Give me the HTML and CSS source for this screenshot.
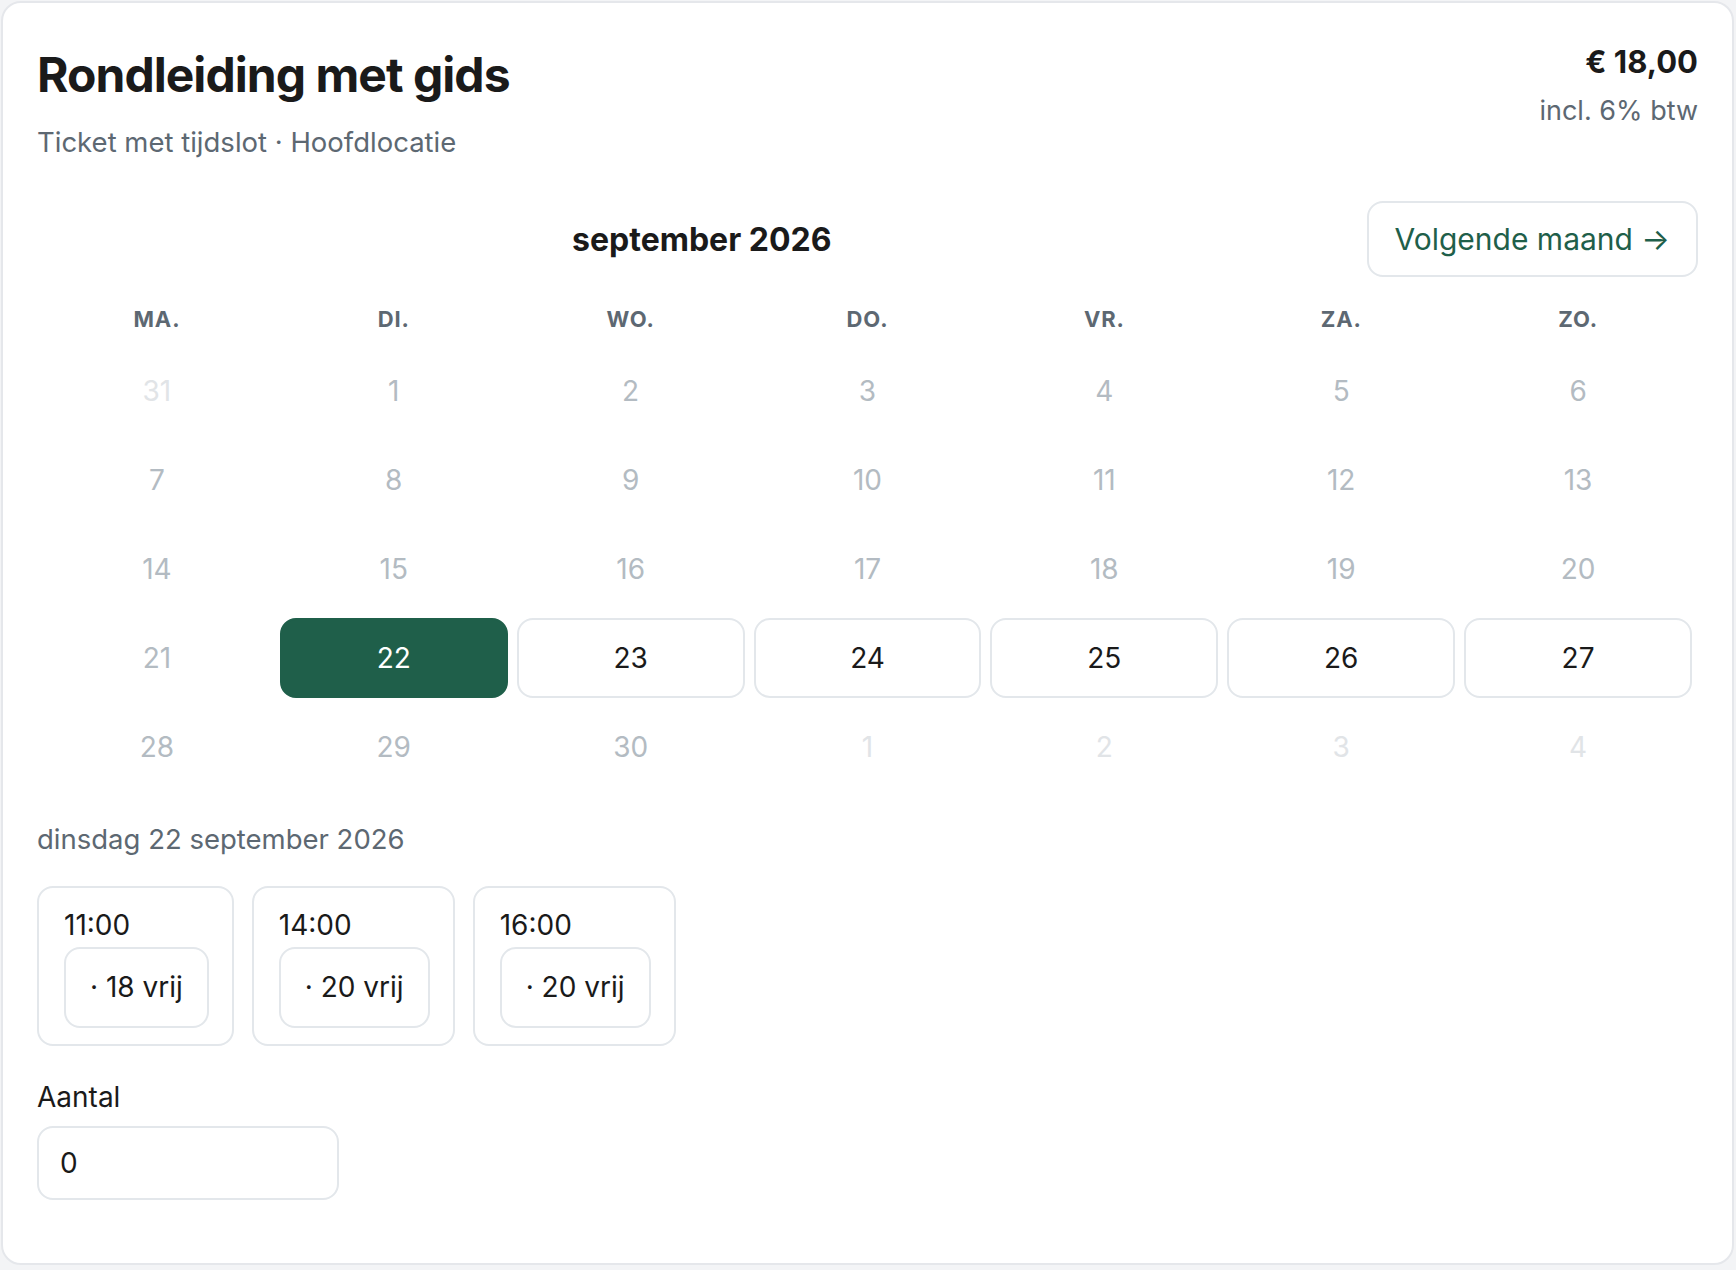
FILE: index.html
```html
<!DOCTYPE html>
<html lang="nl">
<head>
  <meta charset="UTF-8">
  <meta name="viewport" content="width=device-width, initial-scale=1.0">
  <title>Rondleiding met gids</title>
  <link rel="stylesheet" href="styles.css">
</head>
<body>
  <!-- Ticket card -->
  <main class="ticket-card">
    <header class="ticket-header">
      <div class="ticket-info">
        <h1>Rondleiding met gids</h1>
        <p class="ticket-meta">Ticket met tijdslot · Hoofdlocatie</p>
      </div>
      <div class="ticket-price">
        <div class="price">€ 18,00</div>
        <div class="vat">incl. 6% btw</div>
      </div>
    </header>

    <!-- Calendar -->
    <section class="calendar">
      <div class="calendar-nav">
        <h2 class="month-title">september 2026</h2>
        <button class="next-month" type="button">Volgende maand →</button>
      </div>

      <div class="weekdays">
        <span>MA.</span>
        <span>DI.</span>
        <span>WO.</span>
        <span>DO.</span>
        <span>VR.</span>
        <span>ZA.</span>
        <span>ZO.</span>
      </div>

      <div class="days">
        <span class="day outside">31</span>
        <span class="day disabled">1</span>
        <span class="day disabled">2</span>
        <span class="day disabled">3</span>
        <span class="day disabled">4</span>
        <span class="day disabled">5</span>
        <span class="day disabled">6</span>

        <span class="day disabled">7</span>
        <span class="day disabled">8</span>
        <span class="day disabled">9</span>
        <span class="day disabled">10</span>
        <span class="day disabled">11</span>
        <span class="day disabled">12</span>
        <span class="day disabled">13</span>

        <span class="day disabled">14</span>
        <span class="day disabled">15</span>
        <span class="day disabled">16</span>
        <span class="day disabled">17</span>
        <span class="day disabled">18</span>
        <span class="day disabled">19</span>
        <span class="day disabled">20</span>

        <span class="day disabled">21</span>
        <button class="day selected" type="button">22</button>
        <button class="day available" type="button">23</button>
        <button class="day available" type="button">24</button>
        <button class="day available" type="button">25</button>
        <button class="day available" type="button">26</button>
        <button class="day available" type="button">27</button>

        <span class="day disabled">28</span>
        <span class="day disabled">29</span>
        <span class="day disabled">30</span>
        <span class="day outside">1</span>
        <span class="day outside">2</span>
        <span class="day outside">3</span>
        <span class="day outside">4</span>
      </div>
    </section>

    <!-- Time slots -->
    <section class="slots">
      <p class="selected-date">dinsdag 22 september 2026</p>
      <div class="slot-list">
        <button class="slot" type="button">
          <span class="slot-time">11:00</span>
          <span class="slot-free">· 18 vrij</span>
        </button>
        <button class="slot" type="button">
          <span class="slot-time">14:00</span>
          <span class="slot-free">· 20 vrij</span>
        </button>
        <button class="slot" type="button">
          <span class="slot-time">16:00</span>
          <span class="slot-free">· 20 vrij</span>
        </button>
      </div>
    </section>

    <!-- Quantity -->
    <div class="quantity">
      <label for="quantity">Aantal</label>
      <input type="number" id="quantity" name="quantity" value="0" min="0">
    </div>
  </main>
</body>
</html>
```

FILE: styles.css
```css
/* General Styles */
body {
  font-family: Inter, "Noto Sans", sans-serif;
  margin: 0;
  padding: 0;
  background-color: #f3f4f6;
  color: #1a1a1a;
}

button,
input {
  font-family: inherit;
}

/* Card */
.ticket-card {
  margin: 1px 2px 4px 1px;
  padding: 44px 34px 63px 34px;
  background: white;
  border: 2px solid #e5e7eb;
  border-radius: 20px;
}

/* Header */
.ticket-header {
  display: flex;
  justify-content: space-between;
  align-items: flex-start;
}

.ticket-info h1 {
  margin: 0;
  font-size: 48px;
  line-height: 56px;
  font-weight: 700;
  letter-spacing: -0.02em;
}

.ticket-meta {
  margin: 19px 0 0 0;
  font-size: 27.5px;
  line-height: 40px;
  color: #5d6872;
}

.ticket-price {
  text-align: right;
}

.price {
  font-size: 31px;
  line-height: 30px;
  font-weight: 700;
}

.vat {
  margin-top: 14px;
  font-size: 27px;
  line-height: 40px;
  color: #5d6872;
}

/* Calendar */
.calendar-nav {
  display: flex;
  align-items: center;
  margin-top: 39px;
}

.month-title {
  flex: 1;
  margin: 0;
  text-align: center;
  font-size: 32px;
  font-weight: 700;
}

.next-month {
  background: white;
  color: #1f5f4a;
  border: 2px solid #e3e7eb;
  border-radius: 16px;
  padding: 18px 26px;
  font-size: 30px;
  line-height: 36px;
  cursor: pointer;
}

.weekdays,
.days {
  display: grid;
  grid-template-columns: repeat(7, 1fr);
  column-gap: 9px;
  padding: 0 6px;
}

.weekdays {
  margin-top: 24px;
  text-align: center;
  font-size: 22px;
  line-height: 36px;
  font-weight: 700;
  letter-spacing: 0.04em;
  color: #5d6872;
}

.days {
  margin-top: 14px;
  row-gap: 9px;
}

.day {
  display: flex;
  align-items: center;
  justify-content: center;
  height: 80px;
  font-size: 28px;
  border: 2px solid transparent;
  border-radius: 16px;
  box-sizing: border-box;
  background: none;
  padding: 0;
}

.day.outside {
  color: #e1e4e7;
}

.day.disabled {
  color: #b3bbc2;
}

.day.available {
  background: white;
  border-color: #e3e7eb;
  color: #1a1a1a;
  cursor: pointer;
}

.day.selected {
  background: #1f5f4a;
  border-color: #1f5f4a;
  color: white;
  cursor: pointer;
}

/* Time slots */
.selected-date {
  margin: 32px 0 0 0;
  font-size: 27.5px;
  line-height: 40px;
  color: #5d6872;
}

.slot-list {
  display: flex;
  gap: 18px;
  margin-top: 27px;
}

.slot {
  display: flex;
  flex-direction: column;
  align-items: flex-start;
  gap: 2px;
  padding: 17px 23px 16px 25px;
  background: white;
  border: 2px solid #e3e7eb;
  border-radius: 16px;
  color: #1a1a1a;
  cursor: pointer;
}

.slot-time {
  font-size: 28px;
  line-height: 40px;
}

.slot-free {
  display: inline-block;
  padding: 18px 24px;
  border: 2px solid #e3e7eb;
  border-radius: 16px;
  font-size: 28px;
  line-height: 41px;
}

/* Quantity */
.quantity {
  display: flex;
  flex-direction: column;
  align-items: flex-start;
  margin-top: 31px;
}

.quantity label {
  font-size: 28px;
  line-height: 40px;
}

.quantity input {
  margin-top: 9px;
  width: 302px;
  height: 74px;
  box-sizing: border-box;
  padding: 0 21px;
  border: 2px solid #e3e7eb;
  border-radius: 16px;
  font-size: 28px;
  color: #1a1a1a;
  outline: none;
  -moz-appearance: textfield;
}

.quantity input::-webkit-outer-spin-button,
.quantity input::-webkit-inner-spin-button {
  -webkit-appearance: none;
  margin: 0;
}
```
